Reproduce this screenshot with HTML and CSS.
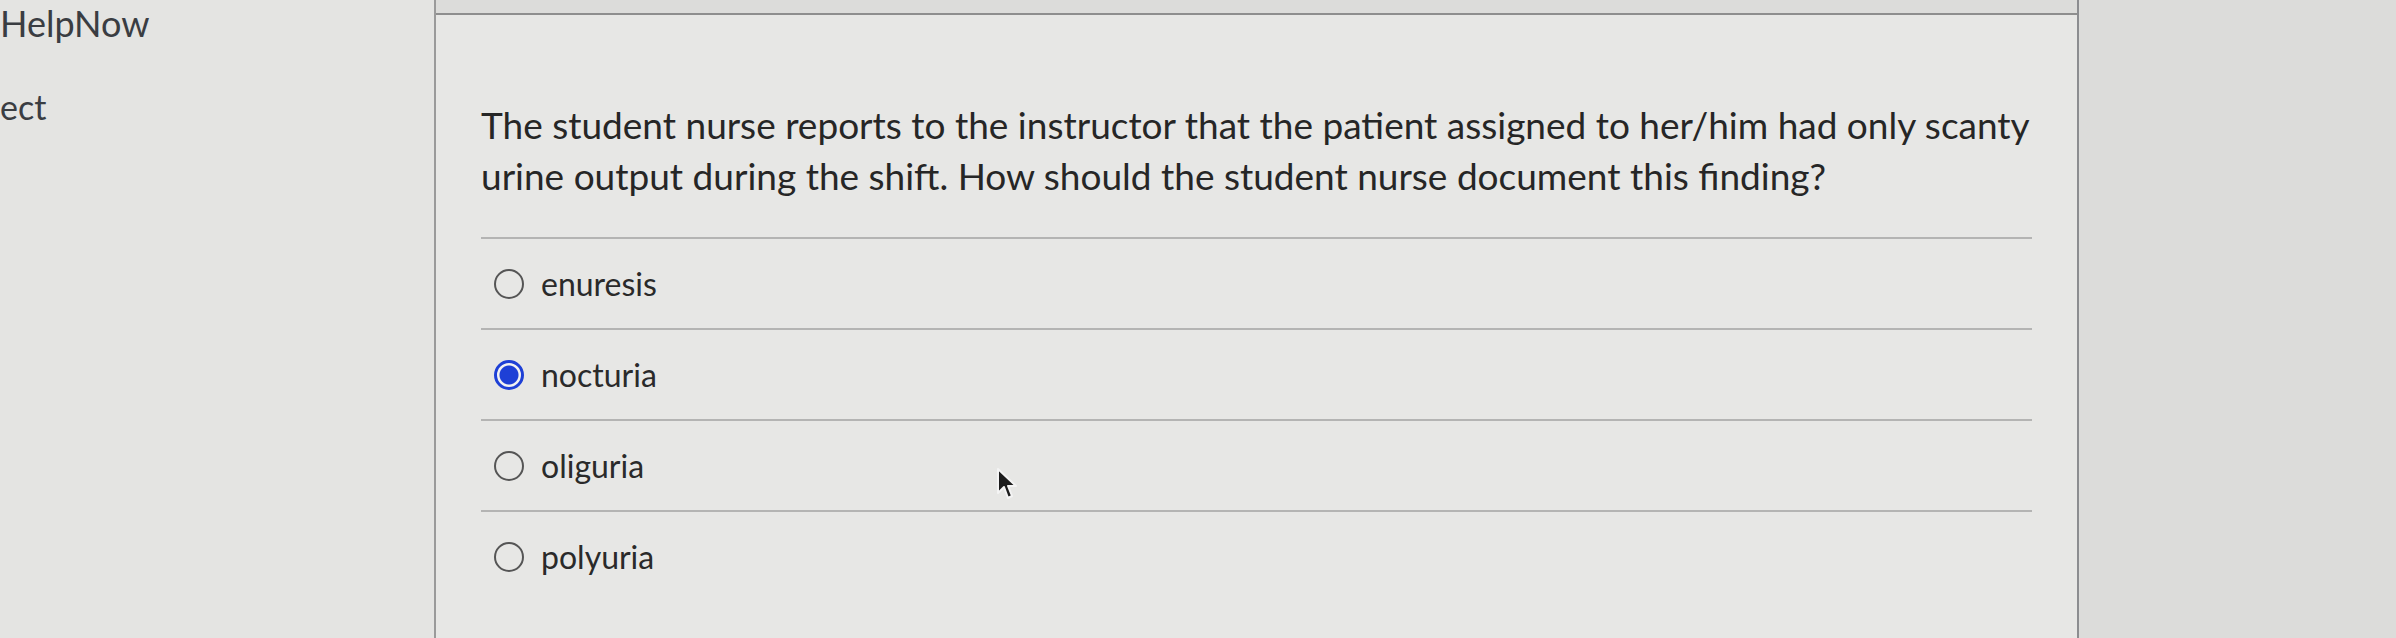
FILE: index.html
```html
<!DOCTYPE html>
<html>
<head>
<meta charset="utf-8">
<link rel="stylesheet" href="styles.css">
</head>
<body>
<div class="page">
  <aside class="sidebar">
    <div class="side-item helpnow">HelpNow</div>
    <div class="side-item select">ect</div>
  </aside>
  <main class="main">
    <div class="topband"></div>
    <section class="panel">
      <p class="question">The student nurse reports to the instructor that the patient assigned to her/him had only scanty urine output during the shift. How should the student nurse document this finding?</p>
      <ul class="options">
        <li class="option"><span class="radio"></span><span class="label">enuresis</span></li>
        <li class="option"><span class="radio checked"></span><span class="label">nocturia</span></li>
        <li class="option"><span class="radio"></span><span class="label">oliguria</span></li>
        <li class="option"><span class="radio"></span><span class="label">polyuria</span></li>
      </ul>
    </section>
  </main>
  <div class="rightside"></div>
</div>
<svg class="cursor" width="24" height="36" viewBox="0 0 24 36">
  <path d="M2 2 L2 26 L8 20 L12 31 L16 29 L12 19 L20 19 Z" fill="#1c1c1c" stroke="#f4f4f4" stroke-width="2" stroke-linejoin="round"/>
</svg>
</body>
</html>
```

FILE: styles.css
```css
html, body {
  margin: 0;
  padding: 0;
}
body {
  background: #e3e3e1;
  font-family: Lato, "Open Sans", "Liberation Sans", sans-serif;
  color: #2b2b2b;
  width: 2396px;
  height: 638px;
  overflow: hidden;
  position: relative;
}
.page {
  display: flex;
  height: 638px;
}
.sidebar {
  width: 434px;
  flex: none;
  border-right: 2px solid #9a9a9a;
  overflow: hidden;
  background: #e4e4e2;
}
.side-item {
  color: #3a3d42;
  white-space: nowrap;
}
.helpnow {
  font-size: 36px;
  margin-top: 2px;
  line-height: 42px;
}
.select {
  font-size: 34px;
  margin-top: 42px;
  line-height: 42px;
}
.main {
  width: 1641px;
  flex: none;
  display: flex;
  flex-direction: column;
  border-right: 2px solid #8c8d90;
}
.topband {
  height: 13px;
  background: #dcdcda;
  border-bottom: 2px solid #8e8e8e;
}
.panel {
  flex: 1;
  background: #e7e7e5;
  padding: 84px 45px 0 45px;
}
.question {
  margin: 0 -30px 0 0;
  font-size: 37px;
  line-height: 51px;
  color: #262626;
}
.options {
  list-style: none;
  margin: 36px 0 0 0;
  padding: 0;
}
.option {
  border-top: 2px solid #b4b4b3;
  height: 89px;
  display: flex;
  align-items: center;
  padding-left: 13px;
}
.radio {
  width: 26px;
  height: 26px;
  border: 2px solid #555;
  border-radius: 50%;
  box-sizing: content-box;
  flex: none;
}
.radio.checked {
  border: 3px solid #1e40d6;
  width: 24px;
  height: 24px;
  background: radial-gradient(circle, #1e40d6 0 9px, #f2f2f2 10px);
}
.label {
  margin-left: 17px;
  font-size: 32px;
  color: #2a2a2a;
}
.rightside {
  flex: 1;
  background: #dcdcda;
}
.cursor {
  position: absolute;
  left: 996px;
  top: 467px;
}
```
